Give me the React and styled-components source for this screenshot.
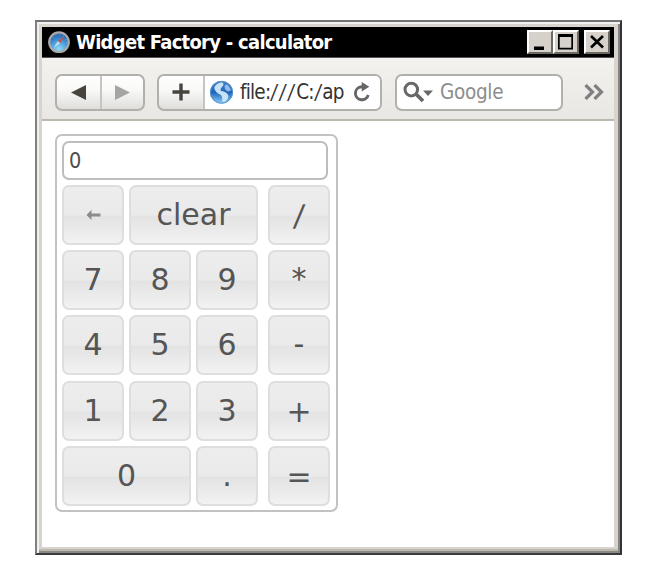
import React from "react";
import styled, { createGlobalStyle } from "styled-components";

const Global = createGlobalStyle`
  * { box-sizing: border-box; }
  body { margin: 0; background: #fff; font-family: "DejaVu Sans", Verdana, sans-serif; }
  button, input { font: inherit; margin: 0; padding: 0; }
  svg { display: block; flex: none; }
`;

const Page = styled.div`
  width: 648px;
  height: 572px;
  padding: 20px 0 0 35px;
`;

const Frame = styled.div`
  width: 587px;
  height: 535px;
  background: #d8d3cc;
  padding: 5px 6px 4px 5px;
  border: 2px solid;
  border-color: #737373 #333 #3b3b3b #808080;
  box-shadow: inset 2px 2px 0 #f3f1ef, inset -2px 0 0 #858585, inset 0 -2px 0 #8b8984, inset 0 -4px 0 #bdb9b0;
`;

const TitleBar = styled.header`
  height: 31px;
  background: #000;
  display: flex;
  align-items: center;
  padding: 0 4px 0 6px;
  border-bottom: 1px solid #555;
`;

const Title = styled.h1`
  margin: 0 0 0 6px;
  flex: 1;
  color: #fff;
  font: bold 20px/28px "DejaVu Sans Condensed", "DejaVu Sans", sans-serif;
  font-stretch: condensed;
  letter-spacing: -0.72px;
  white-space: nowrap;
`;

const WindowButton = styled.button`
  width: 26px;
  height: 24px;
  margin-left: ${(p) => (p.$gap ? 5 : 0)}px;
  background: #d6d1ca;
  border: 2px solid;
  border-color: #fff #6c6963 #6c6963 #fff;
  display: grid;
  place-items: center;
`;

const Toolbar = styled.nav`
  height: 63px;
  display: flex;
  align-items: center;
  padding: 7px 8px 0 13px;
  background: linear-gradient(#f3f2ef, #e8e7e3);
  border-bottom: 2px solid #bcb8ad;
`;

const Group = styled.div`
  width: ${(p) => p.$width}px;
  height: 37px;
  margin-right: ${(p) => p.$gap}px;
  display: flex;
  align-items: stretch;
  overflow: hidden;
  border: 2px solid #b1b0ad;
  border-radius: 7px;
  background: ${(p) => (p.$plain ? "#fff" : "linear-gradient(#fff, #f8f8f7 45%, #dfdedb)")};
`;

const ToolButton = styled.button`
  flex: ${(p) => (p.$width ? `0 0 ${p.$width}px` : 1)};
  border: 0;
  background: transparent;
  display: grid;
  place-items: center;
  & + & { border-left: 2px solid #c6c5c2; }
`;

const Address = styled.div`
  flex: 1;
  display: flex;
  align-items: center;
  background: #fff;
  border-left: 2px solid #c6c5c2;
  padding: 0 9px 0 4px;
`;

const FieldText = styled.span`
  flex: 1;
  margin-left: ${(p) => p.$left}px;
  color: ${(p) => p.$color};
  font: ${(p) => p.$size}px/32px "DejaVu Sans Condensed", "DejaVu Sans", sans-serif;
  font-stretch: condensed;
  letter-spacing: ${(p) => p.$track}px;
  white-space: nowrap;
`;

const Slashes = styled.span`
  display: inline-block;
  letter-spacing: 2.4px;
  transform: translateX(1px) skewX(-7deg);
`;

const SearchBody = styled.div`
  flex: 1;
  display: flex;
  align-items: center;
  padding-left: 6px;
`;

const Content = styled.main`
  height: 426px;
  background: #fff;
  padding: 13px 0 0 13px;
`;

const Calculator = styled.section`
  width: 283px;
  height: 378px;
  border: 2px solid #c2c2c2;
  border-radius: 7px;
  padding: 5px 5px 5px 5px;
`;

const Display = styled.output`
  display: block;
  width: 266px;
  height: 39px;
  border: 2px solid #bdbdbd;
  border-radius: 7px;
  padding-left: 5px;
  color: #4c4c4c;
  font: 21.5px/36px "DejaVu Sans Condensed", "DejaVu Sans", sans-serif;
  font-stretch: condensed;
`;

const Keys = styled.div`
  margin-top: 5px;
  display: grid;
  grid-template-columns: 62px 62px 62px 62px;
  grid-auto-rows: 60px;
  column-gap: 5px;
  row-gap: 5.2px;
`;

const Key = styled.button`
  grid-column: span ${(p) => p.$span || 1};
  ${(p) => p.$operator && "margin: 0 -5px 0 5px;"}
  border: 2px solid #dedede;
  border-radius: 7px;
  background: linear-gradient(#ededed, #eaeaea 50%, #e3e3e3 52%, #f2f2f2);
  color: #555;
  font-size: 30px;
  line-height: 56px;
  display: grid;
  place-items: center;
`;

const Glyph = styled.span`
  display: block;
  transform: translateY(${(p) => p.$drop}px) skewX(${(p) => p.$lean}deg);
`;

const SafariIcon = () => (
  <svg width="22" height="24" viewBox="0 0 22 24">
    <defs>
      <radialGradient id="dial" cx=".5" cy=".85" r=".8">
        <stop offset="0" stopColor="#8edcfb" /><stop offset=".6" stopColor="#3f8fd6" /><stop offset="1" stopColor="#285f9e" />
      </radialGradient>
    </defs>
    <circle cx="11" cy="12.2" r="9.8" fill="url(#dial)" stroke="#a9aaa9" strokeWidth="2.2" />
    <circle cx="11" cy="12.2" r="7.6" fill="none" stroke="#9fd0ee" strokeOpacity=".5" strokeWidth="1" strokeDasharray="1 3" />
    <path d="M16.3 6.5 9.7 10.9l2.6 2.4z" fill="#d05348" />
    <path d="M5.8 18l3.9-7.1 2.6 2.4z" fill="#b9dcf2" />
  </svg>
);

const GlobeIcon = () => (
  <svg width="25" height="25" viewBox="0 0 25 25">
    <defs>
      <linearGradient id="sea" x1="0" y1="0" x2="0" y2="1">
        <stop offset="0" stopColor="#4a82c4" /><stop offset=".5" stopColor="#1f64bc" /><stop offset="1" stopColor="#8ed0fa" />
      </linearGradient>
      <clipPath id="ball"><circle cx="12.5" cy="12.3" r="11.4" /></clipPath>
    </defs>
    <circle cx="12.5" cy="12.3" r="11.4" fill="url(#sea)" />
    <g clipPath="url(#ball)">
      <path d="M7 5c2-2 5-3 7-2 1 1 0 3-1 4s-2 2-1 4c3 0 5 1 7 4 1 3-1 5-4 7l-2-1c1-2 0-4-1-6-3-1-5-3-6-5s-1-3 1-5z" fill="#d3ebfa" opacity=".92" />
      <path d="M16 5c3-1 4 1 6 5-1 1-3 2-4 1-2-1-3-4-2-6z" fill="#a5cff0" opacity=".8" />
    </g>
    <circle cx="12.5" cy="12.3" r="11" fill="none" stroke="#5b91ca" strokeWidth=".9" />
  </svg>
);

const KEYS = [
  ["←", 1], ["clear", 2], ["/", 1, true],
  ["7"], ["8"], ["9"], ["*", 1, true],
  ["4"], ["5"], ["6"], ["-", 1, true],
  ["1"], ["2"], ["3"], ["+", 1, true],
  ["0", 2], ["."], ["=", 1, true],
];

const DROP = { "*": -1, "-": -1, "+": 1, "=": 1, "/": 1 };

const BackArrow = () => (
  <svg width="15" height="12" viewBox="0 0 15 12">
    <path d="M0.5 6 5.5 .8V4.4h9v3.2h-9V11z" fill="#8c8c8c" />
  </svg>
);

export default function App() {
  return (
    <Page>
      <Global />
      <Frame>
        <TitleBar>
          <SafariIcon />
          <Title>Widget Factory - calculator</Title>
          <WindowButton aria-label="Minimize">
            <svg width="22" height="20"><path d="M5 14.5h10v3.5H5z" /></svg>
          </WindowButton>
          <WindowButton aria-label="Maximize">
            <svg width="22" height="20"><path d="M3 2h15v15.5H3zM4.7 5v10.8h11.6V5z" fillRule="evenodd" /></svg>
          </WindowButton>
          <WindowButton $gap aria-label="Close">
            <svg width="22" height="20"><path d="M5 4 17 15.5M17 4 5 15.5" stroke="#000" strokeWidth="2.6" /></svg>
          </WindowButton>
        </TitleBar>
        <Toolbar>
          <Group $width={90} $gap={12}>
            <ToolButton $width={43} aria-label="Back">
              <svg width="16" height="15"><path d="M0 7.5 15 0v15z" fill="#46443c" /></svg>
            </ToolButton>
            <ToolButton aria-label="Forward">
              <svg width="16" height="15"><path d="M15 7.5 0 0v15z" fill="#a5a5a2" /></svg>
            </ToolButton>
          </Group>
          <Group $width={225} $gap={13}>
            <ToolButton $width={44} aria-label="Add bookmark">
              <svg width="18" height="18"><path d="M9 .5v17M.5 9h17" stroke="#46443c" strokeWidth="3.4" /></svg>
            </ToolButton>
            <Address>
              <GlobeIcon />
              <FieldText $left={6} $color="#333" $size={20.5} $track={-0.8}>
                file:<Slashes>///</Slashes>C:<Slashes>/</Slashes>ap
              </FieldText>
              <svg width="18" height="20" viewBox="0 0 18 20">
                <path d="M9.8 4.8H8.5a6.5 6.5 0 1 0 6.7 8.2" fill="none" stroke="#666" strokeWidth="2.9" />
                <path d="M8.7 0 16.3 4.8 8.7 9.6z" fill="#666" />
              </svg>
            </Address>
          </Group>
          <Group $width={168} $gap={21} $plain>
            <SearchBody>
              <svg width="31" height="22" viewBox="0 0 31 22">
                <circle cx="8.3" cy="8.6" r="6.3" fill="none" stroke="#686868" strokeWidth="3" />
                <path d="m13 13 7 7" stroke="#686868" strokeWidth="3.8" />
                <path d="M20 9.5h10L25 15z" fill="#686868" />
              </svg>
              <FieldText $left={6} $color="#8d8d8d" $size={20.5} $track={-0.3}>Google</FieldText>
            </SearchBody>
          </Group>
          <svg width="20" height="16" viewBox="0 0 20 16">
            <path d="m1.5 1 7 7-7 7M10.5 1l7 7-7 7" fill="none" stroke="#808080" strokeWidth="3.2" />
          </svg>
        </Toolbar>
        <Content>
          <Calculator>
            <Display>0</Display>
            <Keys>
              {KEYS.map(([label, span, operator]) => (
                <Key key={label} $span={span} $operator={operator}>
                  {label === "←" ? <BackArrow /> : (
                    <Glyph $drop={DROP[label] || 0} $lean={label === "/" ? -6 : 0}>{label}</Glyph>
                  )}
                </Key>
              ))}
            </Keys>
          </Calculator>
        </Content>
      </Frame>
    </Page>
  );
}
